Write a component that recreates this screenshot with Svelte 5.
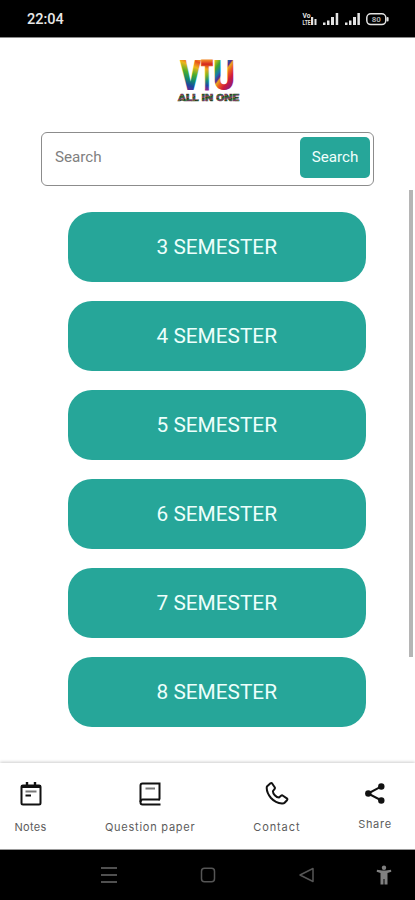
<script lang="ts">
  const semesters = [3, 4, 5, 6, 7, 8];

  let query = $state("");
</script>

<div class="screen">
  <header class="status-bar">
    <span class="clock">22:04</span>
    <svg class="status-icons" width="88" height="16" viewBox="0 0 88 16" aria-hidden="true">
      <g fill="#e4e4e4">
        <text class="volte" x="0.5" y="7" textLength="8" lengthAdjust="spacingAndGlyphs">Vo</text>
        <text class="volte" x="0.5" y="14" textLength="8" lengthAdjust="spacingAndGlyphs">LTE</text>
        <rect x="9" y="6" width="2.2" height="8" />
        <rect x="12.5" y="8" width="2" height="6" />
        <rect x="21" y="11.5" width="2.5" height="2.5" />
        <rect x="25" y="9.5" width="2.5" height="4.5" />
        <rect x="29" y="6" width="3" height="8" />
        <rect x="33.7" y="2" width="2.5" height="12" />
        <rect x="43" y="11.5" width="2.5" height="2.5" />
        <rect x="47" y="9.5" width="2.5" height="4.5" />
        <rect x="51" y="6" width="3" height="8" />
        <rect x="55.4" y="2" width="2.5" height="12" />
        <rect x="84.6" y="6" width="2" height="4.5" rx="1" />
      </g>
      <rect x="64.8" y="2.8" width="19" height="10.8" rx="4" fill="none" stroke="#e4e4e4" stroke-width="1.5" />
      <text class="battery" x="74.3" y="11" text-anchor="middle">80</text>
    </svg>
  </header>

  <main>
    <svg class="logo" width="66" height="48" viewBox="0 0 66 48" role="img" aria-label="VTU All in one">
      <defs>
        <linearGradient id="rainbow-v" gradientUnits="userSpaceOnUse" x1="22" y1="2" x2="9" y2="35">
          <stop offset="0" stop-color="#f6b52a" />
          <stop offset="0.12" stop-color="#e8501f" />
          <stop offset="0.28" stop-color="#edb51c" />
          <stop offset="0.48" stop-color="#4fae28" />
          <stop offset="0.66" stop-color="#128a6c" />
          <stop offset="0.82" stop-color="#1c479f" />
          <stop offset="1" stop-color="#7a2290" />
        </linearGradient>
        <linearGradient id="rainbow-t" gradientUnits="userSpaceOnUse" x1="29" y1="4" x2="29" y2="34">
          <stop offset="0" stop-color="#f08a2a" />
          <stop offset="0.14" stop-color="#d6251f" />
          <stop offset="0.3" stop-color="#f0a41d" />
          <stop offset="0.5" stop-color="#7fb51f" />
          <stop offset="0.7" stop-color="#158a78" />
          <stop offset="0.85" stop-color="#2445a2" />
          <stop offset="1" stop-color="#8c2391" />
        </linearGradient>
        <linearGradient id="rainbow-u" gradientUnits="userSpaceOnUse" x1="35" y1="8" x2="57" y2="24">
          <stop offset="0" stop-color="#e9bd1c" />
          <stop offset="0.2" stop-color="#3fa630" />
          <stop offset="0.38" stop-color="#147cab" />
          <stop offset="0.5" stop-color="#59288f" />
          <stop offset="0.56" stop-color="#e9a51e" />
          <stop offset="0.68" stop-color="#ea5a22" />
          <stop offset="0.84" stop-color="#d21c38" />
          <stop offset="1" stop-color="#a01b68" />
        </linearGradient>
        <linearGradient id="caption" x1="0" x2="0.18" y1="0" y2="0.1" spreadMethod="repeat">
          <stop offset="0" stop-color="#33281c" />
          <stop offset="0.35" stop-color="#256b35" />
          <stop offset="0.7" stop-color="#78306a" />
          <stop offset="1" stop-color="#6f7427" />
        </linearGradient>
      </defs>
      <text class="logo-letter" x="3" y="34" textLength="21" lengthAdjust="spacingAndGlyphs" fill="url(#rainbow-v)">V</text>
      <text class="logo-letter logo-stem" x="24" y="34" textLength="12" lengthAdjust="spacingAndGlyphs" fill="url(#rainbow-t)" stroke="url(#rainbow-t)">T</text>
      <text class="logo-letter" x="36" y="34" textLength="22" lengthAdjust="spacingAndGlyphs" fill="url(#rainbow-u)">U</text>
      <text class="logo-caption" x="1" y="45" textLength="61" lengthAdjust="spacingAndGlyphs" fill="url(#caption)" stroke="url(#caption)">ALL IN ONE</text>
    </svg>

    <form class="search" onsubmit={(e) => e.preventDefault()}>
      <input type="text" placeholder="Search" aria-label="Search" bind:value={query} />
      <button type="submit">Search</button>
    </form>

    <div class="content">
      <div class="semesters">
        {#each semesters as semester}
          <button class="semester">{semester} SEMESTER</button>
        {/each}
      </div>
      <div class="scrollbar"></div>
    </div>
  </main>

  <nav class="tabs">
    <a class="tab notes" href="#notes">
      <svg width="24" height="26" viewBox="0 0 24 26" fill="none" stroke="#111" stroke-width="2">
        <rect x="2.5" y="4.5" width="19" height="19" rx="1.5" />
        <path d="M2 5.5h20" stroke-width="3" />
        <path d="M8 1v5M16 1v5" stroke-width="2.4" />
        <path d="M6.5 10.5h11" stroke="#777" />
        <path d="M6.5 14.5h5.5" />
      </svg>
      <span>Notes</span>
    </a>
    <a class="tab question" href="#question-paper">
      <svg width="24" height="26" viewBox="0 0 24 26" fill="none" stroke="#111" stroke-width="2">
        <path d="M22 18.5H21.5V2.5H4.5Q2.5 2.5 2.5 4.5V21.5Q2.5 23.5 4.5 23.5H22.5" />
        <path d="M2.5 21Q2.5 18.5 4.5 18.5H21.5" />
        <path d="M7.5 7.5h9.5" stroke="#777" />
      </svg>
      <span>Question paper</span>
    </a>
    <a class="tab contact" href="#contact">
      <svg width="24" height="26" viewBox="0 0 24 26" fill="none" stroke="#111" stroke-width="2" stroke-linejoin="round">
        <path d="M2.2 5.2L5.5 2.3Q6.5 1.7 7.3 2.7L9.7 6.2Q10.3 7.2 9.5 8.1L8 10Q7.7 12 9.8 14.2T14 16.5L16 14.8Q17 14 18 14.7L21.8 17.3Q22.8 18.2 22 19.2L19.6 21.8Q18.8 22.6 17 22.5Q10.5 22 6 17Q1.8 12 1.7 7Q1.7 5.8 2.2 5.2Z" />
      </svg>
      <span>Contact</span>
    </a>
    <a class="tab share" href="#share">
      <svg width="24" height="26" viewBox="0 0 24 26" fill="#111">
        <path d="M18.5 5.3L5 12.5L18.5 19.5" fill="none" stroke="#111" stroke-width="2" />
        <circle cx="18.3" cy="5.5" r="3.2" />
        <circle cx="5.3" cy="12.5" r="3.2" />
        <circle cx="18.3" cy="19.5" r="3.2" />
      </svg>
      <span>Share</span>
    </a>
  </nav>

  <footer class="system-nav">
    <svg width="16" height="16" viewBox="0 0 16 16" stroke="#505050" stroke-width="2">
      <path d="M0 1h16M0 8h16M0 15h16" />
    </svg>
    <svg width="16" height="16" viewBox="0 0 16 16" fill="none" stroke="#555" stroke-width="1.5">
      <rect x="1.5" y="1.2" width="13" height="13.5" rx="3" />
    </svg>
    <svg width="16" height="16" viewBox="0 0 16 16" fill="none" stroke="#555" stroke-width="1.5" stroke-linejoin="round">
      <path d="M14 1.5v13L1 8Z" />
    </svg>
    <svg class="access" width="16" height="20" viewBox="0 0 16 20" fill="#808080">
      <circle cx="8" cy="2.7" r="2.2" />
      <path d="M1 4.8L6 5.5H10L15 4.8L15.3 6.8L11.5 8V19.5H8.5V14H7.5V19.5H4.5V8L0.7 6.8Z" />
    </svg>
  </footer>
</div>

<style>
  :global(body) {
    margin: 0;
    background: #fff;
  }

  .screen {
    display: flex;
    flex-direction: column;
    width: 415px;
    height: 900px;
    overflow: hidden;
    background: #fff;
    font-family: Roboto, "Noto Sans", sans-serif;
  }

  .status-bar {
    flex: none;
    display: flex;
    align-items: center;
    justify-content: space-between;
    height: 38px;
    padding: 0 25px 0 27px;
    box-sizing: border-box;
    border-bottom: 1px solid #8a8a8a;
    background: #000;
    color: #e8e8e8;
  }
  .clock {
    font-size: 14.5px;
    font-weight: 500;
    line-height: 37px;
    padding-top: 1px;
  }
  .volte {
    font-size: 7.5px;
    font-weight: 700;
  }
  .battery {
    font-size: 8px;
    font-weight: 700;
    fill: #aaa;
  }

  main {
    flex: 1;
    min-height: 0;
    display: flex;
    flex-direction: column;
  }
  .logo {
    display: block;
    flex: none;
    margin: 18px 0 0 177px;
    overflow: visible;
  }
  .logo-letter {
    font-size: 43px;
    font-weight: 900;
  }
  .logo-stem {
    stroke-width: 1px;
  }
  .logo-caption {
    font-size: 9px;
    font-weight: 900;
    stroke-width: 0.6px;
  }

  .search {
    flex: none;
    display: flex;
    align-items: flex-start;
    width: 333px;
    height: 54px;
    margin: 28px 0 0 41px;
    padding: 4px 3px 4px 13px;
    box-sizing: border-box;
    border: 1px solid #8c8c8c;
    border-radius: 6px;
  }
  .search input {
    flex: 1;
    min-width: 0;
    height: 40px;
    padding: 0;
    border: 0;
    outline: 0;
    background: none;
    font: 15.2px Roboto, sans-serif;
  }
  .search input::placeholder {
    color: #808080;
    opacity: 1;
  }
  .search button {
    width: 70px;
    height: 41px;
    padding: 0 0 1px;
    border: 0;
    border-radius: 5px;
    background: #26a699;
    color: #f0fffc;
    font: 15.2px Roboto, sans-serif;
  }

  .content {
    display: flex;
    justify-content: space-between;
    align-items: flex-start;
    padding: 4px 2px 0 67.5px;
  }
  .semesters {
    display: flex;
    flex-direction: column;
    gap: 18.9px;
    width: 298.6px;
    padding-top: 22.4px;
  }
  .semester {
    height: 70px;
    padding: 0;
    border: 0;
    border-radius: 24px;
    background: #26a699;
    color: #edfffc;
    font: 20.8px Roboto, sans-serif;
  }
  .scrollbar {
    width: 4px;
    height: 467px;
    background: #b5b5b5;
  }

  .tabs {
    flex: none;
    display: flex;
    justify-content: space-between;
    height: 87px;
    padding: 18px 23px 0 14px;
    box-sizing: border-box;
    border-bottom: 1px solid #999;
    box-shadow: 0 -1px 3px rgba(0, 0, 0, 0.2);
    background: #fff;
  }
  .tab {
    display: flex;
    flex-direction: column;
    align-items: center;
    gap: 12px;
    color: #5c5c5c;
    font: 11px/16px Inter, sans-serif;
    text-decoration: none;
    white-space: nowrap;
  }
  .tab svg {
    flex: none;
  }
  .notes {
    width: 33px;
    letter-spacing: 0.3px;
  }
  .question {
    width: 91px;
    letter-spacing: 0.75px;
  }
  .contact {
    width: 47px;
    letter-spacing: 0.9px;
  }
  .share {
    width: 34px;
    gap: 9px;
    letter-spacing: 0.7px;
  }

  .system-nav {
    flex: none;
    display: flex;
    align-items: center;
    gap: 83px;
    height: 50px;
    padding-left: 101px;
    box-sizing: border-box;
    background: #000;
  }
  .access {
    margin-left: -22px;
  }
</style>
